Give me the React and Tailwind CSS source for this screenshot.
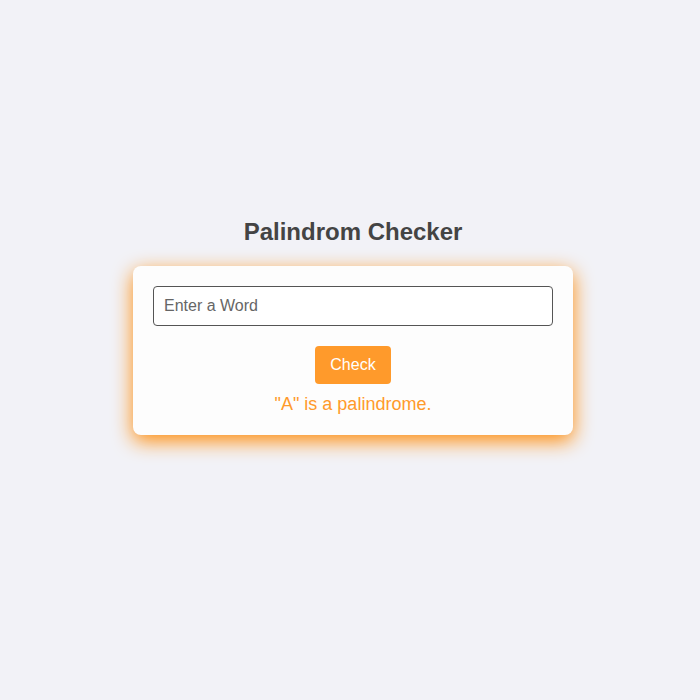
import { useState } from "react"

function App() {
  const [word, setWord] = useState("")
  const [result, setResult] = useState('"A" is a palindrome.')

  const check = () => {
    const w = word.trim()
    if (!w) return
    const clean = w.toLowerCase().replace(/[^a-z0-9]/g, "")
    const isPal = clean === clean.split("").reverse().join("")
    setResult(`"${w}" ${isPal ? "is" : "is not"} a palindrome.`)
  }

  return (
    <div className="min-h-screen bg-[#f2f2f7] flex flex-col items-center pt-[218px] pl-[6px] font-['Liberation_Sans',Arial,sans-serif]">
      <h1 className="text-2xl leading-[28px] font-bold text-[#444] mb-5">Palindrom Checker</h1>
      <div className="w-[440px] bg-[#fdfdfd] rounded-lg p-5 shadow-[0_6px_20px_rgba(255,140,10,1)] flex flex-col items-center">
        <input
          value={word}
          onChange={(e) => setWord(e.target.value)}
          placeholder="Enter a Word"
          className="w-full h-10 border border-[#555] rounded px-[10px] text-base text-[#333] placeholder:text-[#666] bg-white outline-none"
        />
        <button
          onClick={check}
          className="mt-5 w-[76px] h-[38px] rounded bg-[#ff9a2b] text-white text-base"
        >
          Check
        </button>
        <p className="mt-[10px] text-lg leading-[21px] text-[#ff9a2b]">{result}</p>
      </div>
    </div>
  )
}

export default App
